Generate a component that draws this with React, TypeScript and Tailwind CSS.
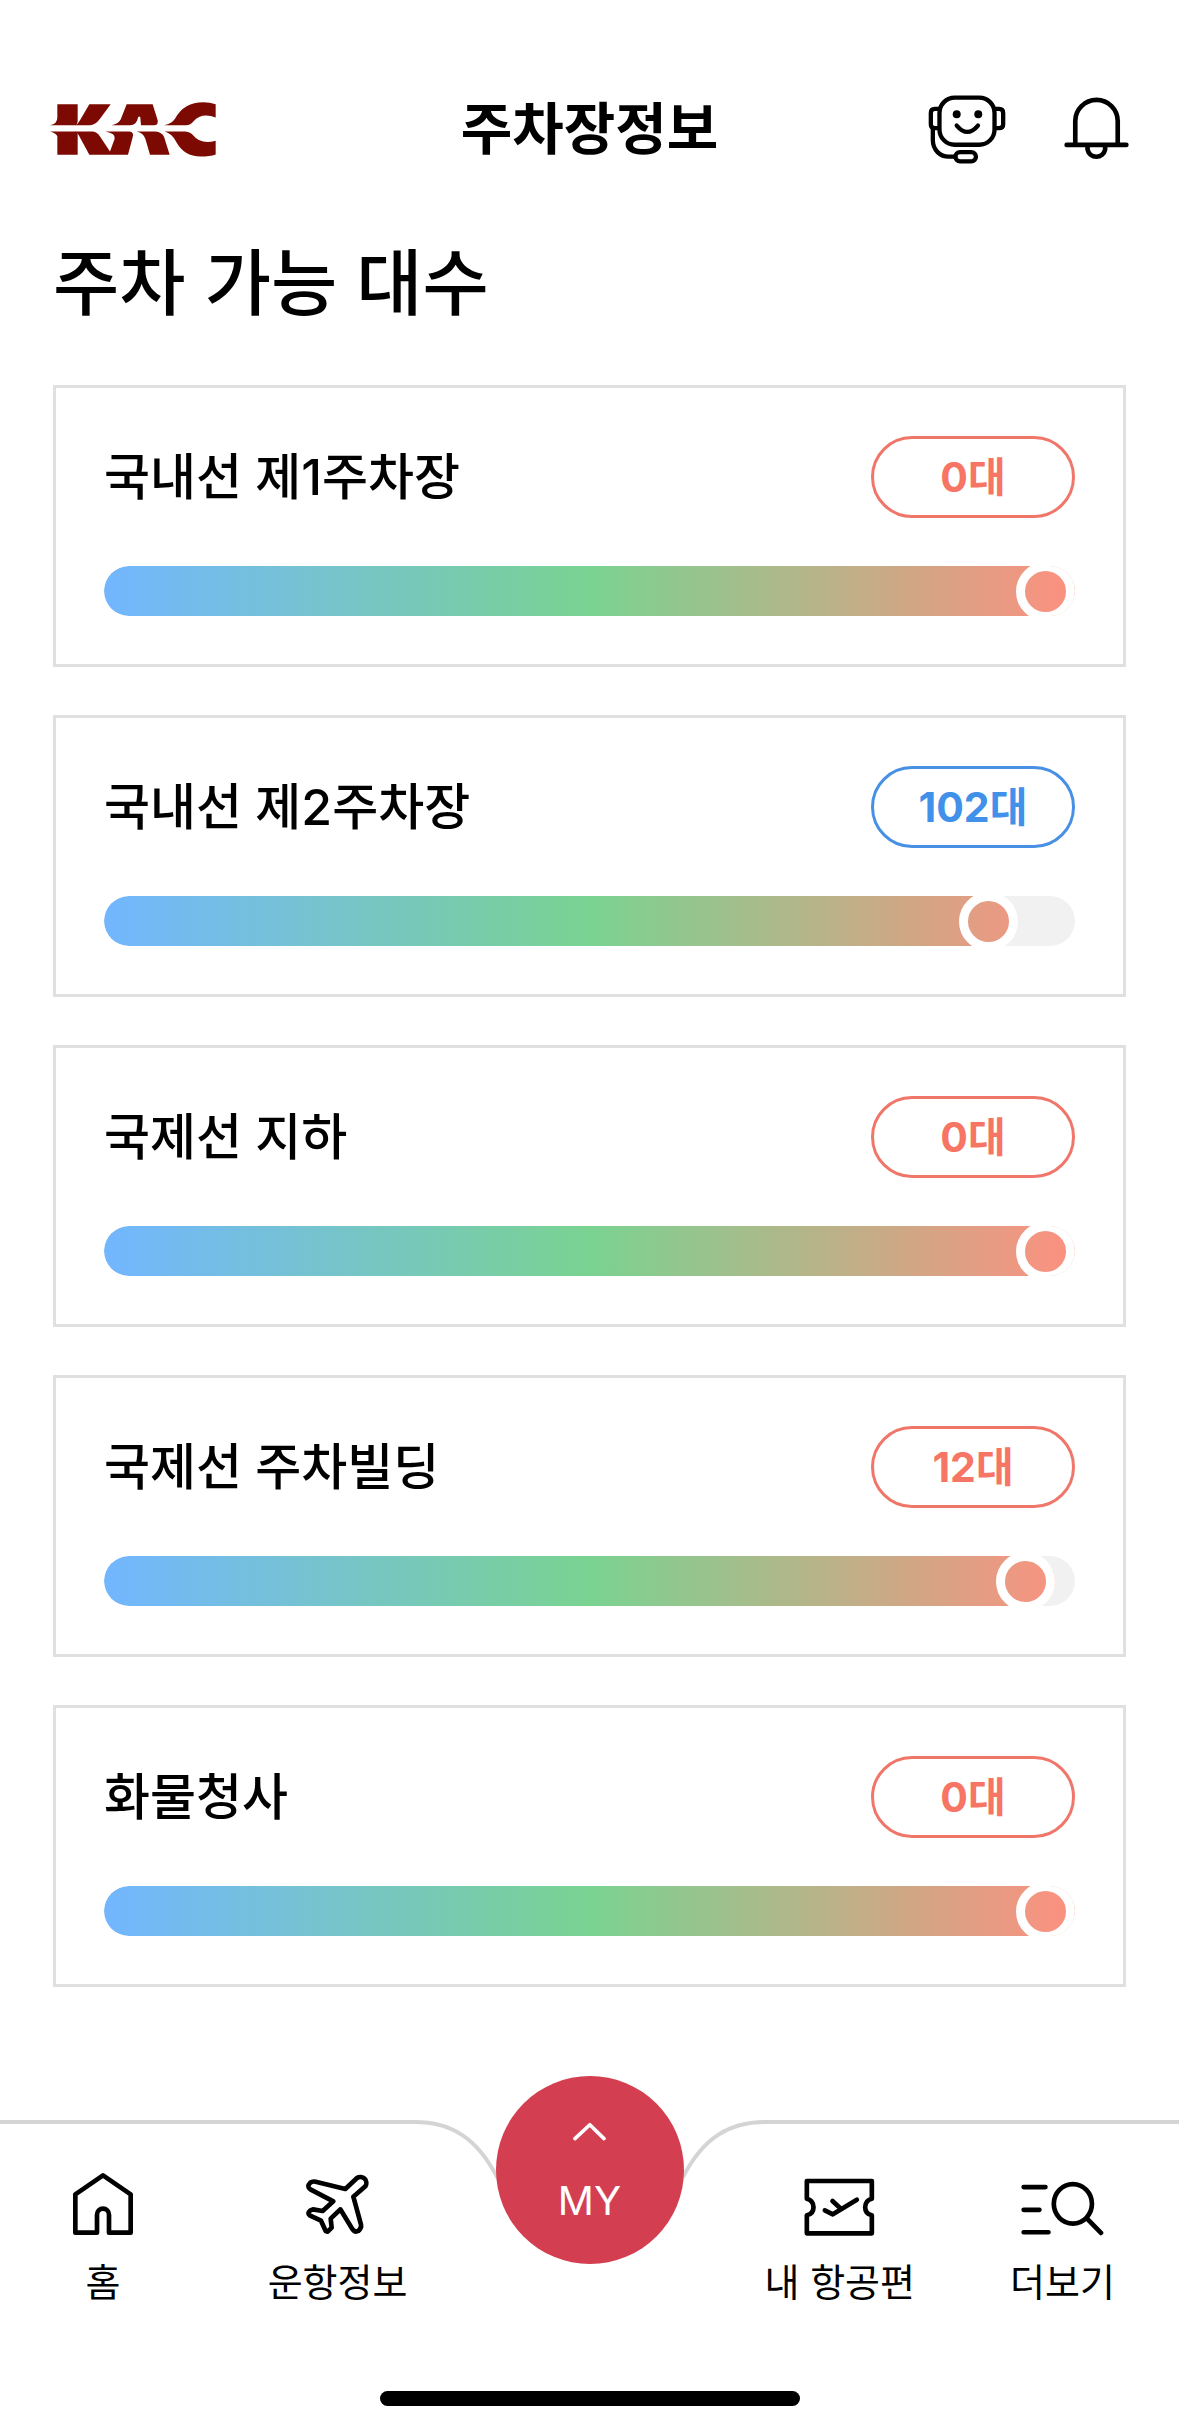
import { useState, type ReactNode } from "react";
import clsx from "clsx";

type Lot = { id: string; name: string; free: number; used: number };

const lots: Lot[] = [
  { id: "domestic-1", name: "국내선 제1주차장", free: 0, used: 1000 },
  { id: "domestic-2", name: "국내선 제2주차장", free: 102, used: 937 },
  { id: "intl-underground", name: "국제선 지하", free: 0, used: 1000 },
  { id: "intl-building", name: "국제선 주차빌딩", free: 12, used: 978 },
  { id: "cargo", name: "화물청사", free: 0, used: 1000 },
];

function KacLogo() {
  return (
    <svg viewBox="60 62 498 164" className="h-[55px] w-[166px]" fill="#7c0a02" aria-hidden="true">
      <path d="M82 68H143V120Q143 127 136 131H60Q82 128 82 108Z" />
      <path d="M178 68H242L210 112Q196 131 180 131H134Q144 128 150 116Z" />
      <path d="M60 150H138Q143 154 143 160V220H82V165Q80 156 60 150Z" />
      <path d="M136 150H188Q202 152 210 165L240 210L254 172Q258 156 226 150H298Q313 152 308 167L294 220H178L152 172Q146 158 136 150Z" />
      <path d="M290 68H368L383 116Q386 131 372 131H333L331 108Q328 102 324 108C321 123 314 131 300 131H245Q266 126 272 114Z" />
      <path d="M320 150H376Q396 152 402 166L419 220H360L346 172Q340 154 320 150Z" />
      <path d="M557 68V108Q515 92 490 120Q482 131 468 131H402Q426 126 436 110Q462 62 520 62Q540 62 557 68Z" />
      <path d="M404 150H466Q482 152 490 162Q512 190 557 178V219Q540 225 512 225Q462 225 438 180Q426 156 404 150Z" />
    </svg>
  );
}

function ChatbotIcon() {
  return (
    <svg viewBox="84 70 234 208" className="h-[69px] w-[78px]" fill="none" stroke="#000" strokeWidth="13" strokeLinecap="round" strokeLinejoin="round" aria-hidden="true">
      <rect x="118" y="78" width="166" height="142" rx="46" />
      <path d="M116 112H104Q92 112 92 124V159Q92 170 104 170H114M286 112H298Q310 112 310 124V159Q310 170 298 170H288" />
      <path d="M98 172V206C98 236 120 256 146 256H166" />
      <rect x="166" y="242" width="62" height="28" rx="14" />
      <path d="M170 162Q202 200 234 162" />
      <circle cx="170" cy="128" r="12" fill="#000" stroke="none" />
      <circle cx="235" cy="128" r="12" fill="#000" stroke="none" />
    </svg>
  );
}

function BellIcon() {
  return (
    <svg viewBox="490 80 196 192" className="h-16 w-[65px]" fill="none" stroke="#000" strokeWidth="14" strokeLinecap="round" aria-hidden="true">
      <path d="M524 220V152A64 64 0 0 1 652 152V220" />
      <path d="M498 224H678" />
      <path d="M561 228V238A27 27 0 0 0 614 238V228" />
    </svg>
  );
}

function HomeIcon() {
  return (
    <svg viewBox="216 336 186 192" className="h-16 w-[62px]" fill="none" stroke="#000" strokeWidth="14" strokeLinejoin="round" aria-hidden="true">
      <path d="M226 518V403L309 346L392 403V518H327V464A18 18 0 0 0 291 464V518Z" />
    </svg>
  );
}

function PlaneIcon() {
  return (
    <svg viewBox="914 340 198 192" className="h-16 w-[66px]" fill="none" stroke="#000" strokeWidth="14" strokeLinejoin="round" aria-hidden="true">
      <path d="M1035 391L1070 358A18 18 0 0 1 1095 383L1059 414L1082 498Q1084 508 1074 517Q1063 522 1056 511L1020 452L991 480L994 507L982 519L976 517L962 486L928 470Q920 464 929 456L938 452L967 457L999 428L930 392Q918 384 930 372Q936 367 946 369Z" />
    </svg>
  );
}

function TicketIcon() {
  return (
    <svg viewBox="196 238 212 174" className="h-[58px] w-[71px]" fill="none" stroke="#000" strokeWidth="14" strokeLinecap="round" strokeLinejoin="round" aria-hidden="true">
      <path d="M204 247H399V300Q379 305 379 326Q379 346 399 350V404H204V350Q224 346 224 326Q224 305 204 300Z" />
      <path d="M258 335L282 347L354 303M281 307L306 330" />
    </svg>
  );
}

function MoreIcon() {
  return (
    <svg viewBox="844 252 248 164" className="h-[55px] w-[83px]" fill="none" stroke="#000" strokeWidth="14" strokeLinecap="round" aria-hidden="true">
      <path d="M852 270H917M852 338H899M852 405H926" />
      <ellipse cx="999" cy="320" rx="57" ry="59" />
      <path d="M1042 365L1083 407" />
    </svg>
  );
}

function LotCard({ lot }: { lot: Lot }) {
  const rest = 1 - lot.used / 1000;

  return (
    <li className="border-3 border-[#e0e0e0] p-12">
      <div className="flex items-center justify-between">
        <label htmlFor={lot.id} className="text-[50px] leading-none font-medium">
          {lot.name}
        </label>
        <span
          className={clsx(
            "flex h-[82px] w-[204px] items-center justify-center rounded-full border-3 text-[41px] leading-none font-bold",
            lot.free > 100 ? "border-[#4790e4] text-[#4190ea]" : "border-[#f0766a] text-[#f77565]"
          )}
        >
          {lot.free}대
        </span>
      </div>

      <div className="relative mt-12 h-[50px] overflow-hidden rounded-full bg-[#f1f1f1]">
        {/* the gradient spans the whole track, only the used part is shown */}
        <div
          className="h-full bg-[linear-gradient(90deg,#72b6ff,#7ad391_50%,#fd9080)]"
          style={{ clipPath: `inset(0 calc((100% - 59px) * ${rest.toFixed(3)}) 0 0 round 25px)` }}
        />
        <input
          id={lot.id}
          type="range"
          min={0}
          max={1000}
          value={lot.used}
          readOnly
          className="pointer-events-none absolute inset-0 h-full w-full appearance-none bg-transparent [&::-webkit-slider-thumb]:h-[59px] [&::-webkit-slider-thumb]:w-[59px] [&::-webkit-slider-thumb]:appearance-none [&::-webkit-slider-thumb]:rounded-full [&::-webkit-slider-thumb]:border-9 [&::-webkit-slider-thumb]:border-white [&::-webkit-slider-thumb]:bg-transparent"
        />
      </div>
    </li>
  );
}

function Tab({ label, children }: { label: string; children: ReactNode }) {
  return (
    <a href="#" className="flex flex-col items-center">
      <span className="flex h-16 items-end">{children}</span>
      <span className="mt-[22px] text-[38px] leading-12 whitespace-nowrap">{label}</span>
    </a>
  );
}

export default function App() {
  const [open, setOpen] = useState(false);

  return (
    <div className="flex min-h-screen flex-col bg-white font-['Inter','Noto_Sans_CJK_KR',sans-serif] text-black">
      <header className="grid grid-cols-[1fr_auto_1fr] items-center px-[50px] pt-[93px]">
        <a href="#" aria-label="KAC">
          <KacLogo />
        </a>
        <h1 className="text-[56px] leading-[72px] font-bold">주차장정보</h1>
        <div className="flex items-center justify-end gap-[58px]">
          <button type="button" aria-label="챗봇">
            <ChatbotIcon />
          </button>
          <button type="button" aria-label="알림">
            <BellIcon />
          </button>
        </div>
      </header>

      <main className="px-[53px]">
        <h2 className="mt-[78px] text-[72px] leading-[80px] font-medium">주차 가능 대수</h2>
        <ul className="mt-[62px] flex flex-col gap-12">
          {lots.map((lot) => (
            <LotCard key={lot.id} lot={lot} />
          ))}
        </ul>
      </main>

      <nav className="relative mt-auto pb-6">
        <div className="absolute inset-x-0 top-0 flex">
          <div className="h-1 flex-1 bg-[#d4d4d4]" />
          <svg viewBox="30 209 1080 180" className="h-[60px] w-[360px]" fill="none" stroke="#d4d4d4" strokeWidth="12" aria-hidden="true">
            <path d="M30 215H45C150 215 230 260 292 382M1110 215H1095C990 215 910 260 848 382" />
          </svg>
          <div className="h-1 flex-1 bg-[#d4d4d4]" />
        </div>

        <div className="relative grid grid-cols-[1fr_188px_1fr] pt-[52px]">
          <div className="flex justify-between pr-[88px] pl-[72px]">
            <Tab label="홈"><HomeIcon /></Tab>
            <Tab label="운항정보"><PlaneIcon /></Tab>
          </div>
          <div className="col-start-3 flex justify-between pr-16 pl-[81px]">
            <Tab label="내 항공편"><TicketIcon /></Tab>
            <Tab label="더보기"><MoreIcon /></Tab>
          </div>
        </div>

        <button
          type="button"
          aria-expanded={open}
          onClick={() => setOpen(!open)}
          className="absolute -top-11 left-1/2 flex h-[188px] w-[188px] -translate-x-1/2 flex-col items-center rounded-full bg-[#d43e51] pt-[46px] text-white"
        >
          <svg viewBox="522 220 100 57" className="h-[19px] w-[33px]" fill="none" stroke="currentColor" strokeWidth="11" strokeLinecap="round" strokeLinejoin="round" aria-hidden="true">
            <path d="M528 270L573 228L616 270" />
          </svg>
          <span className="mt-9 text-[40px] leading-12">MY</span>
        </button>

        <div className="mx-auto mt-[85px] h-[15px] w-[420px] rounded-full bg-black" />
      </nav>
    </div>
  );
}
